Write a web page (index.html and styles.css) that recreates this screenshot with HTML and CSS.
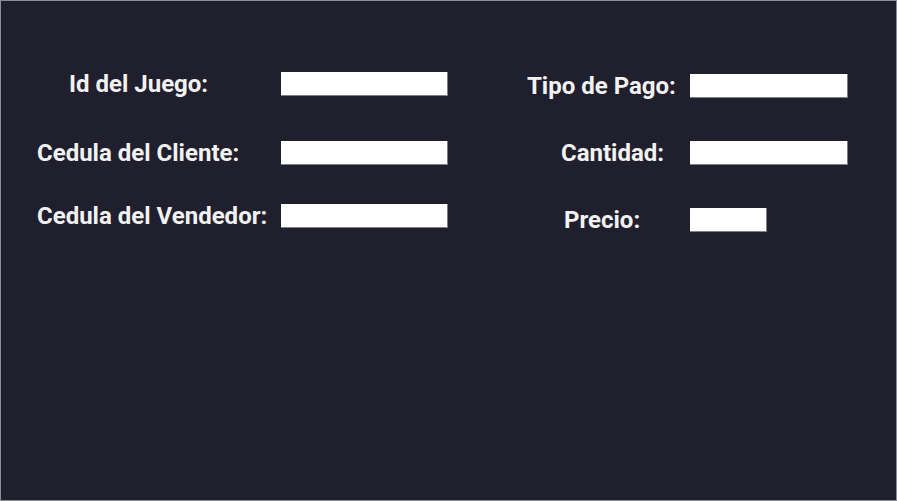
FILE: index.html
```html
<!DOCTYPE html>
<html lang="es">
<head>
<meta charset="utf-8">
<title>Venta</title>
<link rel="stylesheet" href="styles.css">
</head>
<body>
<div class="frame">
  <div class="col col-left">
    <div class="row row-l1">
      <label class="lbl lbl-l lbl-id">Id del Juego:</label>
      <div class="field field-l"></div>
    </div>
    <div class="row row-l2">
      <label class="lbl lbl-l">Cedula del Cliente:</label>
      <div class="field field-l"></div>
    </div>
    <div class="row row-l3">
      <label class="lbl lbl-l">Cedula del Vendedor:</label>
      <div class="field field-l"></div>
    </div>
  </div>
  <div class="col col-right">
    <div class="row row-r1">
      <label class="lbl lbl-r">Tipo de Pago:</label>
      <div class="field field-r"></div>
    </div>
    <div class="row row-r2">
      <label class="lbl lbl-r lbl-cant">Cantidad:</label>
      <div class="field field-r"></div>
    </div>
    <div class="row row-r3">
      <label class="lbl lbl-r lbl-precio">Precio:</label>
      <div class="field field-small"></div>
    </div>
  </div>
</div>
</body>
</html>
```
FILE: styles.css
```css
* { box-sizing: border-box; }
html, body { margin: 0; padding: 0; background: #201f2e; }
.frame {
  width: 897px;
  height: 501px;
  background: #201f2e;
  border: 1px solid #8e8e98;
  display: flex;
  align-items: flex-start;
  font-family: Roboto, "Liberation Sans", sans-serif;
  font-weight: 700;
  font-size: 24px;
  line-height: 24px;
  color: #f2f2f2;
}
.col { display: flex; flex-direction: column; }
.col-left { margin-left: 36px; margin-top: 71px; width: 411px; }
.col-right { margin-left: 79px; margin-top: 73px; }
.row { display: flex; align-items: flex-start; height: 24px; }
.row-l2 { margin-top: 45px; }
.row-l3 { margin-top: 39px; }
.row-r2 { margin-top: 43px; }
.row-r3 { margin-top: 43px; }
.lbl { display: block; margin-top: 0; white-space: nowrap; }
.lbl-l { width: 244px; }
.lbl-id { padding-left: 32px; }
.lbl-r { width: 163px; }
.lbl-cant { padding-left: 34px; }
.lbl-precio { padding-left: 37px; }
.field {
  height: 24px;
  background: #ffffff;
  border-right: 1px solid #7e7e88;
  border-bottom: 1px solid #7e7e88;
}
.field-l { width: 167px; }
.field-r { width: 158px; }
.field-small { width: 77px; }
```
